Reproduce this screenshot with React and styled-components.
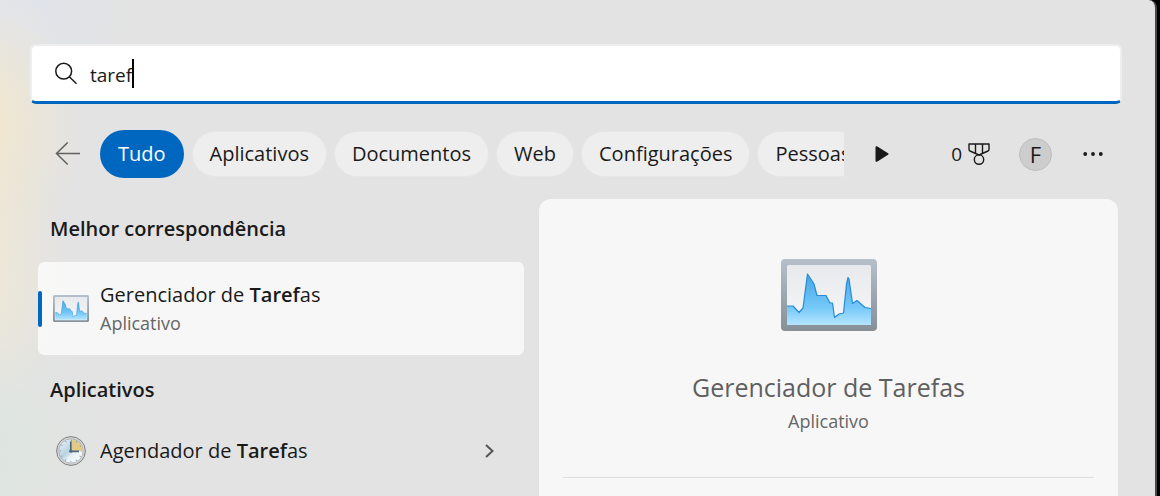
import React, { useState } from 'react';
import styled, { createGlobalStyle } from 'styled-components';

const GlobalStyle = createGlobalStyle`
    * {
        box-sizing: border-box;
    }

    body {
        margin: 0;
        background: #000;
        color: #1a1a1a;
        font-family: "Open Sans", "Noto Sans", sans-serif;
        font-size: 20px;
        line-height: 28px;
    }

    button, input {
        font: inherit;
        color: inherit;
    }
`;

const Panel = styled.div`
    display: flex;
    flex-direction: column;
    min-height: 100vh;
    margin-right: 3px;
    padding: 44px 33px 0 30px;
    border-right: 2px solid #484848;
    border-top-right-radius: 8px;
    background:
        radial-gradient(ellipse 100px 150px at -20px 125px, #f3e8cd 0%, rgba(243, 232, 205, 0) 100%),
        radial-gradient(ellipse 150px 110px at -20px 10px, #dfe4ef 0%, rgba(223, 228, 239, 0) 100%),
        radial-gradient(ellipse 90px 130px at -20px 280px, #efe8d6 0%, rgba(239, 232, 214, 0) 100%),
        radial-gradient(ellipse 130px 140px at -20px 450px, #dde6e0 0%, rgba(221, 230, 224, 0) 100%),
        #e3e3e3;
    overflow: hidden;
`;

const SearchBox = styled.label`
    display: flex;
    align-items: center;
    height: 60px;
    padding-left: 23px;
    border: 2px solid #eeeeee;
    border-bottom: 3px solid #0067c0;
    border-radius: 6px;
    background: #fff;
    background-clip: padding-box;
    cursor: text;
`;

const SearchInput = styled.input`
    field-sizing: content;
    margin-left: 12px;
    padding: 2px 0 0;
    border: 0;
    outline: 0;
    background: transparent;
    caret-color: transparent;
    font-size: 19px;
`;

const Caret = styled.span`
    width: 2px;
    height: 29px;
    background: #000;
`;

const Toolbar = styled.div`
    display: flex;
    align-items: center;
    height: 48px;
    margin-top: 26px;
`;

const IconButton = styled.button`
    display: flex;
    align-items: center;
    justify-content: center;
    flex: none;
    width: 32px;
    height: 32px;
    padding: 0;
    border: 0;
    background: transparent;
`;

const BackButton = styled(IconButton)`
    margin-left: 22px;
`;

const NextButton = styled(IconButton)`
    margin-left: 22px;
`;

const Tabs = styled.nav`
    display: flex;
    align-items: center;
    gap: 9px;
    width: 744px;
    margin-left: 16px;
    overflow: hidden;
`;

const Tab = styled.button`
    flex: none;
    height: ${({ $active }) => ($active ? 48 : 44)}px;
    padding: 0 ${({ $active }) => ($active ? 18 : 17)}px;
    border: 0;
    border-radius: 24px;
    background: ${({ $active }) => ($active ? '#0067c0' : '#eeeeee')};
    box-shadow: ${({ $active }) => ($active ? 'none' : '0 0 0 1px #e6e6e6')};
    color: ${({ $active }) => ($active ? '#fff' : '#1a1a1a')};
`;

const Actions = styled.div`
    display: flex;
    align-items: center;
    gap: 25px;
    margin: 0 13px 0 auto;
`;

const Rewards = styled.button`
    display: flex;
    align-items: center;
    gap: 6px;
    padding: 0 4px;
    border: 0;
    background: transparent;
    font-size: 19px;
`;

const Avatar = styled.button`
    width: 33px;
    height: 33px;
    padding: 0;
    border: 1px solid #bdbdbd;
    border-radius: 50%;
    background: #cdcdcd;
    font-size: 22px;
    line-height: 30px;
`;

const Columns = styled.main`
    display: grid;
    grid-template-columns: 486fr 579fr;
    gap: 15px;
    flex: 1;
    margin: 21px 4px 0 8px;
`;

const Results = styled.section`
    padding-top: 16px;
`;

const GroupTitle = styled.h2`
    margin: 0;
    padding-left: 12px;
    font-size: 20px;
    font-weight: 600;
    line-height: 28px;
`;

const Result = styled.button`
    display: flex;
    align-items: center;
    width: 100%;
    height: ${({ $selected }) => ($selected ? 93 : 64)}px;
    margin: ${({ $selected }) => ($selected ? '19px 0 21px' : '15px 0 0')};
    padding: 0 30px 0 0;
    border: 0;
    border-radius: 6px;
    background: ${({ $selected }) => ($selected ? 'rgba(255, 255, 255, 0.72)' : 'transparent')};
    text-align: left;

    &::before {
        content: '';
        width: 4px;
        height: 36px;
        border-radius: 2px;
        background: ${({ $selected }) => ($selected ? '#0067c0' : 'transparent')};
    }
`;

const ResultIcon = styled.span`
    display: flex;
    justify-content: center;
    width: 38px;
    margin: 0 10px;
`;

const ResultText = styled.span`
    flex: 1;
`;

const Match = styled.b`
    font-weight: 600;
`;

const Kind = styled.span`
    display: block;
    color: #666;
    font-size: 18px;
`;

const Preview = styled.section`
    display: flex;
    flex-direction: column;
    align-items: center;
    padding: 60px 24px 0;
    border-radius: 12px 12px 0 0;
    background: #f7f7f7;
`;

const PreviewTitle = styled.h1`
    margin: 38px 0 2px;
    color: #5f5f5f;
    font-size: 25px;
    font-weight: 400;
    line-height: 36px;
`;

const Divider = styled.hr`
    width: 100%;
    margin: 42px 0 0;
    border: 0;
    border-top: 1px solid #dedede;
`;

const TaskManagerIcon = ({ id, width, height, frame }) => (
    <svg width={width} height={height} viewBox="0 0 96 72" aria-hidden="true">
        <defs>
            <linearGradient id={`${id}-frame`} x1="0" y1="0" x2="0" y2="1">
                <stop offset="0" stopColor="#b5c0cb" />
                <stop offset="1" stopColor="#878f97" />
            </linearGradient>
            <linearGradient id={`${id}-screen`} x1="0" y1="0" x2="0" y2="1">
                <stop offset="0" stopColor="#e7e9ec" />
                <stop offset="1" stopColor="#f6f7f8" />
            </linearGradient>
            <linearGradient id={`${id}-fill`} x1="0" y1="0" x2="0" y2="1">
                <stop offset="0" stopColor="#45a5e6" />
                <stop offset="0.65" stopColor="#74c8f8" />
                <stop offset="1" stopColor="#b5e5ff" />
            </linearGradient>
        </defs>
        <rect width="96" height="72" rx="4" fill={`url(#${id}-frame)`} />
        <rect x={frame} y={frame} width={96 - frame * 2} height={72 - frame * 2} rx="1.5" fill={`url(#${id}-screen)`} />
        <path
            d="M6 47 H12 L18 53.500 L22 49 L26.500 15 L33 25 L36 36.500 H45 L49 44 H51.500 L53.500 58.500 L58 55 L62.500 54 L65.500 25 L67 18.500 L68 20 L71.500 44.500 L76 41.500 L84 48.500 L90 49.500 V66 H6 Z"
            fill={`url(#${id}-fill)`}
        />
        <path
            d="M6 47 H12 L18 53.500 L22 49 L26.500 15 L33 25 L36 36.500 H45 L49 44 H51.500 L53.500 58.500 L58 55 L62.500 54 L65.500 25 L67 18.500 L68 20 L71.500 44.500 L76 41.500 L84 48.500 L90 49.500"
            fill="none"
            stroke="#268bd8"
            strokeWidth="1.200"
            strokeLinejoin="round"
        />
    </svg>
);

const ClockIcon = () => (
    <svg width="30" height="30" viewBox="0 0 30 30" aria-hidden="true">
        <defs>
            <linearGradient id="clock-face" x1="0" y1="0" x2="1" y2="1">
                <stop offset="0" stopColor="#f2f9fd" />
                <stop offset="0.45" stopColor="#b7d2e0" />
                <stop offset="0.6" stopColor="#e6f1f6" />
                <stop offset="1" stopColor="#fff" />
            </linearGradient>
        </defs>
        <circle cx="15" cy="15" r="14.400" fill="#d4d4d6" stroke="#808080" strokeWidth="1" />
        <circle cx="15" cy="15" r="12.200" fill="url(#clock-face)" stroke="#aaa8a8" strokeWidth="0.800" />
        <path d="M15 15 V3.500 A11.500 11.500 0 0 1 26.500 15 Z" fill="#e3cb86" />
        <circle cx="15" cy="15" r="10.600" fill="none" stroke="#7898aa" strokeWidth="1.300" strokeDasharray="0.900 4.650" strokeDashoffset="0.450" />
        <path d="M14.800 5.500 V15.300 H23" fill="none" stroke="#4c6985" strokeWidth="1.700" />
        <circle cx="14.800" cy="15.200" r="1.600" fill="#4c6985" />
    </svg>
);

const SearchIcon = () => (
    <svg width="23" height="23" viewBox="0 0 23 23" fill="none" stroke="#1a1a1a" strokeWidth="1.500" aria-hidden="true">
        <circle cx="8.700" cy="9.200" r="7.900" />
        <path d="M14.300 14.800 L21.500 21.800" />
    </svg>
);

const BackIcon = () => (
    <svg width="26" height="24" viewBox="0 0 26 24" fill="none" stroke="#606060" strokeWidth="1.500" aria-hidden="true">
        <path d="M25 11.500 H1.500 M12.700 0.500 L1.500 11.500 L12.700 22.500" />
    </svg>
);

const NextIcon = () => (
    <svg width="14" height="16" viewBox="0 0 14 16" aria-hidden="true">
        <path d="M1.500 1.200 L12.500 8 L1.500 14.800 Z" fill="#1a1a1a" stroke="#1a1a1a" strokeWidth="2" strokeLinejoin="round" />
    </svg>
);

const MedalIcon = () => (
    <svg width="22" height="22" viewBox="0 0 22 22" fill="none" stroke="#1a1a1a" strokeWidth="1.400" strokeLinejoin="round" aria-hidden="true">
        <path d="M1 1 H21 V6.500 Q21 7.500 20 8 L11 12 L2 8 Q1 7.500 1 6.500 Z" />
        <path d="M7.500 1 V10.300 M14.500 1 V10.300" />
        <circle cx="11" cy="16.600" r="4.700" />
    </svg>
);

const MoreIcon = () => (
    <svg width="20" height="4" viewBox="0 0 20 4" fill="#1a1a1a" aria-hidden="true">
        <circle cx="2.200" cy="2" r="1.900" />
        <circle cx="10" cy="2" r="1.900" />
        <circle cx="17.800" cy="2" r="1.900" />
    </svg>
);

const ChevronIcon = () => (
    <svg width="9" height="14" viewBox="0 0 9 14" fill="none" stroke="#555" strokeWidth="2" aria-hidden="true">
        <path d="M1 1 L7.500 7 L1 13" />
    </svg>
);

const tabs = ['Tudo', 'Aplicativos', 'Documentos', 'Web', 'Configurações', 'Pessoas'];

const App = () => {
    const [query, setQuery] = useState('taref');
    const [active, setActive] = useState('Tudo');

    return (
        <>
            <GlobalStyle />
            <Panel>
                <SearchBox>
                    <SearchIcon />
                    <SearchInput aria-label="Pesquisar" value={query} onChange={e => setQuery(e.target.value)} />
                    <Caret />
                </SearchBox>

                <Toolbar>
                    <BackButton aria-label="Voltar"><BackIcon /></BackButton>
                    <Tabs>
                        {tabs.map(tab => (
                            <Tab key={tab} $active={tab === active} onClick={() => setActive(tab)}>{tab}</Tab>
                        ))}
                    </Tabs>
                    <NextButton aria-label="Mais filtros"><NextIcon /></NextButton>
                    <Actions>
                        <Rewards>0 <MedalIcon /></Rewards>
                        <Avatar>F</Avatar>
                        <IconButton aria-label="Opções"><MoreIcon /></IconButton>
                    </Actions>
                </Toolbar>

                <Columns>
                    <Results>
                        <GroupTitle>Melhor correspondência</GroupTitle>
                        <Result $selected>
                            <ResultIcon><TaskManagerIcon id="small" width={36} height={27} frame={5} /></ResultIcon>
                            <ResultText>
                                Gerenciador de <Match>Taref</Match>as
                                <Kind>Aplicativo</Kind>
                            </ResultText>
                        </Result>
                        <GroupTitle>Aplicativos</GroupTitle>
                        <Result>
                            <ResultIcon><ClockIcon /></ResultIcon>
                            <ResultText>Agendador de <Match>Taref</Match>as</ResultText>
                            <ChevronIcon />
                        </Result>
                    </Results>

                    <Preview>
                        <TaskManagerIcon id="large" width={96} height={72} frame={6} />
                        <PreviewTitle>Gerenciador de Tarefas</PreviewTitle>
                        <Kind>Aplicativo</Kind>
                        <Divider />
                    </Preview>
                </Columns>
            </Panel>
        </>
    );
};

export default App;
